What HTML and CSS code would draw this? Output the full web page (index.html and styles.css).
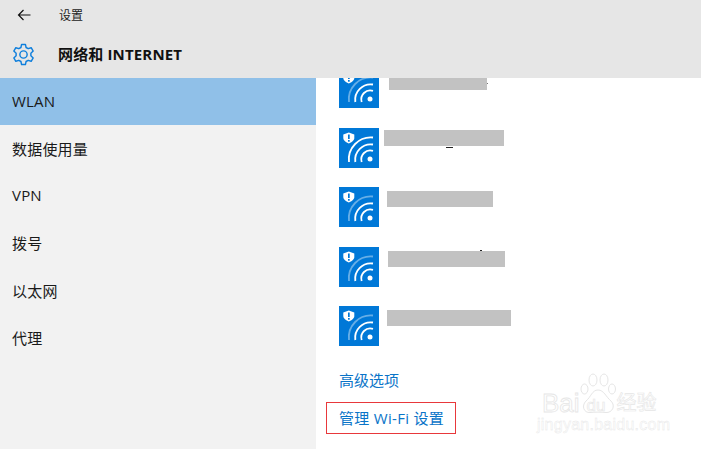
FILE: index.html
```html
<!DOCTYPE html>
<html lang="zh-CN">
<head>
    <meta charset="UTF-8">
    <title>设置</title>
    <link rel="stylesheet" href="styles.css">
</head>
<body>
<svg class="defs">
    <symbol id="wifi" viewBox="0 0 40 40">
        <path d="M4.300 6.500 L9.800 4.500 L15.300 6.500 V10 C15.300 12.500 12.500 14.300 9.800 15.500 C7.100 14.300 4.300 12.500 4.300 10 Z" fill="#fff"/>
        <rect x="9" y="6.500" width="1.700" height="4.500" fill="#0078d7"/>
        <rect x="9" y="12" width="1.700" height="1.700" fill="#0078d7"/>
        <circle cx="31" cy="31" r="2.500" fill="#fff"/>
        <path d="M22.700 34 A9 9 0 0 1 34 22.800" fill="none" stroke="#fff" stroke-width="1.800"/>
        <path d="M16.300 34 A15.500 15.500 0 0 1 34 16.500" fill="none" stroke="#fff" stroke-width="1.800"/>
    </symbol>
</svg>

<div class="root-container">
    <header class="header">
        <div class="title-row">
            <svg class="back-icon" viewBox="0 0 14 12"><path d="M6.500 1 L1.500 6 L6.500 11 M1.500 6 H13.500" fill="none" stroke="#111" stroke-width="1.200"/></svg>
            <span class="title">设置</span>
        </div>
        <div class="section-row">
            <svg class="gear-icon" viewBox="0 0 24 24">
                <path d="M10 1.500 H14 L14.700 4.700 L16.900 5.900 L20 4.900 L22.100 8.400 L19.700 10.600 V13.400 L22.100 15.600 L20 19.100 L16.900 18.100 L14.700 19.300 L14 22.500 H10 L9.300 19.300 L7.100 18.100 L4 19.100 L1.900 15.600 L4.300 13.400 V10.600 L1.900 8.400 L4 4.900 L7.100 5.900 L9.300 4.700 Z" fill="none" stroke="#0f7fdc" stroke-width="1.500" stroke-linejoin="round"/>
                <circle cx="12" cy="12" r="3.800" fill="none" stroke="#0f7fdc" stroke-width="1.500"/>
            </svg>
            <span class="section-name">网络和 INTERNET</span>
        </div>
    </header>

    <div class="body-row">
        <nav class="sidebar">
            <div class="nav-item nav-item-active">WLAN</div>
            <div class="nav-item">数据使用量</div>
            <div class="nav-item">VPN</div>
            <div class="nav-item">拨号</div>
            <div class="nav-item">以太网</div>
            <div class="nav-item">代理</div>
        </nav>

        <main class="content">
            <div class="network-list">
                <div class="network">
                    <svg class="wifi-icon wifi-weak" viewBox="0 0 40 40"><use href="#wifi"/><path class="far-arc" d="M10 34 A22 22 0 0 1 34 9.500"/></svg>
                    <div class="mask mask-1"></div>
                </div>
                <div class="network">
                    <svg class="wifi-icon" viewBox="0 0 40 40"><use href="#wifi"/><path class="far-arc" d="M10 34 A22 22 0 0 1 34 9.500"/></svg>
                    <div class="mask mask-2"></div>
                </div>
                <div class="network">
                    <svg class="wifi-icon wifi-weak" viewBox="0 0 40 40"><use href="#wifi"/><path class="far-arc" d="M10 34 A22 22 0 0 1 34 9.500"/></svg>
                    <div class="mask mask-3"></div>
                </div>
                <div class="network">
                    <svg class="wifi-icon wifi-weak" viewBox="0 0 40 40"><use href="#wifi"/><path class="far-arc" d="M10 34 A22 22 0 0 1 34 9.500"/></svg>
                    <div class="mask mask-4"></div>
                </div>
                <div class="network">
                    <svg class="wifi-icon wifi-weak" viewBox="0 0 40 40"><use href="#wifi"/><path class="far-arc" d="M10 34 A22 22 0 0 1 34 9.500"/></svg>
                    <div class="mask mask-5"></div>
                </div>
            </div>
            <a class="link link-advanced">高级选项</a>
            <a class="link link-manage">管理 Wi-Fi 设置</a>
        </main>
    </div>
</div>

<div class="watermark">
    <svg class="paw" viewBox="0 0 37 41">
        <g fill="none" stroke="#e6e6e6" stroke-width="1">
            <ellipse cx="4.500" cy="16" rx="3.500" ry="5"/>
            <ellipse cx="13" cy="7" rx="4" ry="6"/>
            <ellipse cx="24" cy="7" rx="4" ry="6"/>
            <ellipse cx="32" cy="16" rx="3.500" ry="5"/>
            <path d="M18 17 C24 17 26 24 31 28 C36 33 32 40 26 39.500 C21 39 15 39 10 39.500 C4 40 1 33 6 28 C11 24 12 17 18 17 Z"/>
        </g>
    </svg>
    <div class="wm-top"><span>Bai</span><span class="wm-du">du</span><span class="wm-cn">经验</span></div>
    <div class="wm-bottom">jingyan.baidu.com</div>
</div>
</body>
</html>
```

FILE: styles.css
```css
body {
    margin: 0;
    background: #fff;
    font-family: "Open Sans", "Noto Sans CJK SC", sans-serif;
}

.defs {
    display: none;
}

.root-container {
    width: 701px;
    height: 449px;
    display: flex;
    flex-direction: column;
    overflow: hidden;
}

.header {
    height: 78px;
    flex: none;
    background: #e6e6e6;
    position: relative;
    z-index: 1;
}

.title-row {
    height: 29px;
    display: flex;
    align-items: center;
    padding-left: 17px;
    gap: 28px;
}

.back-icon {
    width: 14px;
    height: 12px;
    margin-top: 1px;
}

.title {
    font-size: 12px;
    color: #222;
}

.section-row {
    height: 48px;
    display: flex;
    align-items: center;
    padding-left: 12px;
    gap: 23px;
}

.gear-icon {
    width: 23px;
    height: 23px;
    margin-top: 2px;
}

.section-name {
    font-size: 15px;
    font-weight: 700;
    letter-spacing: 0.150px;
    color: #111;
}

.body-row {
    flex: 1;
    display: flex;
    min-height: 0;
}

.sidebar {
    width: 316px;
    flex: none;
    background: #f2f2f2;
}

.nav-item {
    height: 47.400px;
    box-sizing: border-box;
    display: flex;
    align-items: center;
    padding: 0 0 2px 12px;
    font-size: 15px;
    letter-spacing: 0.200px;
    color: #1a1a1a;
}

.nav-item-active {
    background: #90c0e8;
}

.content {
    flex: 1;
    display: flex;
    flex-direction: column;
    padding-left: 23px;
}

.network-list {
    margin-top: -10px;
    display: flex;
    flex-direction: column;
    gap: 19.500px;
}

.network {
    height: 40px;
    display: flex;
}

.wifi-icon {
    width: 40px;
    height: 40px;
    flex: none;
    background: #0078d7;
}

.far-arc {
    fill: none;
    stroke: #fff;
    stroke-width: 1.800;
}

.wifi-weak .far-arc {
    stroke-opacity: 0.4;
}

.mask {
    position: relative;
    background: #c2c2c2;
    height: 16px;
}

.mask-1 {
    width: 98px;
    height: 15px;
    margin: 7px 0 0 10px;
}

.mask-2 {
    width: 120px;
    margin: 2px 0 0 5px;
}

.mask-3 {
    width: 106px;
    margin: 4px 0 0 8px;
}

.mask-4 {
    width: 117px;
    margin: 4px 0 0 9px;
}

.mask-5 {
    width: 124px;
    margin: 4px 0 0 8px;
}

/* bits of the hidden names that stick out of the masks */
.mask-1::after,
.mask-2::after,
.mask-4::after {
    content: "";
    position: absolute;
    background: #222;
}

.mask-1::after {
    left: 98px;
    top: 8px;
    width: 1px;
    height: 1px;
    background: #777;
}

.mask-2::after {
    left: 62px;
    top: 17px;
    width: 7px;
    height: 1px;
}

.mask-4::after {
    left: 92px;
    top: -1px;
    width: 2px;
    height: 1px;
}

.link {
    font-size: 15px;
    color: #0a74c8;
}

.link-advanced {
    margin-top: 24px;
    line-height: 20px;
}

.link-manage {
    margin: 12px 0 0 -13px;
    width: 130px;
    height: 32px;
    box-sizing: border-box;
    border: 1px solid #e8383b;
    padding-left: 12px;
    line-height: 30px;
    letter-spacing: 0.300px;
    white-space: nowrap;
}

.watermark {
    position: absolute;
    left: 537px;
    top: 372px;
    width: 130px;
    color: #fff;
    font-family: "Liberation Sans", "Noto Sans CJK SC", sans-serif;
}

.paw {
    position: absolute;
    left: 43px;
    top: 1px;
    width: 37px;
    height: 41px;
}

.wm-top {
    padding: 19px 0 0 5px;
    height: 24px;
    display: flex;
    align-items: center;
    font-size: 26px;
    line-height: 24px;
    -webkit-text-stroke: 0.800px #e6e6e6;
    white-space: nowrap;
}

.wm-du {
    position: relative;
    top: 3px;
    margin-left: 7px;
    font-size: 17px;
    -webkit-text-stroke: 0.600px #e6e6e6;
}

.wm-cn {
    margin-left: 11px;
    font-size: 20px;
    -webkit-text-stroke: 0.600px #e6e6e6;
}

.wm-bottom {
    margin-top: 2px;
    font-size: 16px;
    line-height: 16px;
    letter-spacing: 0.250px;
    -webkit-text-stroke: 0.400px #e6e6e6;
    white-space: nowrap;
}
```
